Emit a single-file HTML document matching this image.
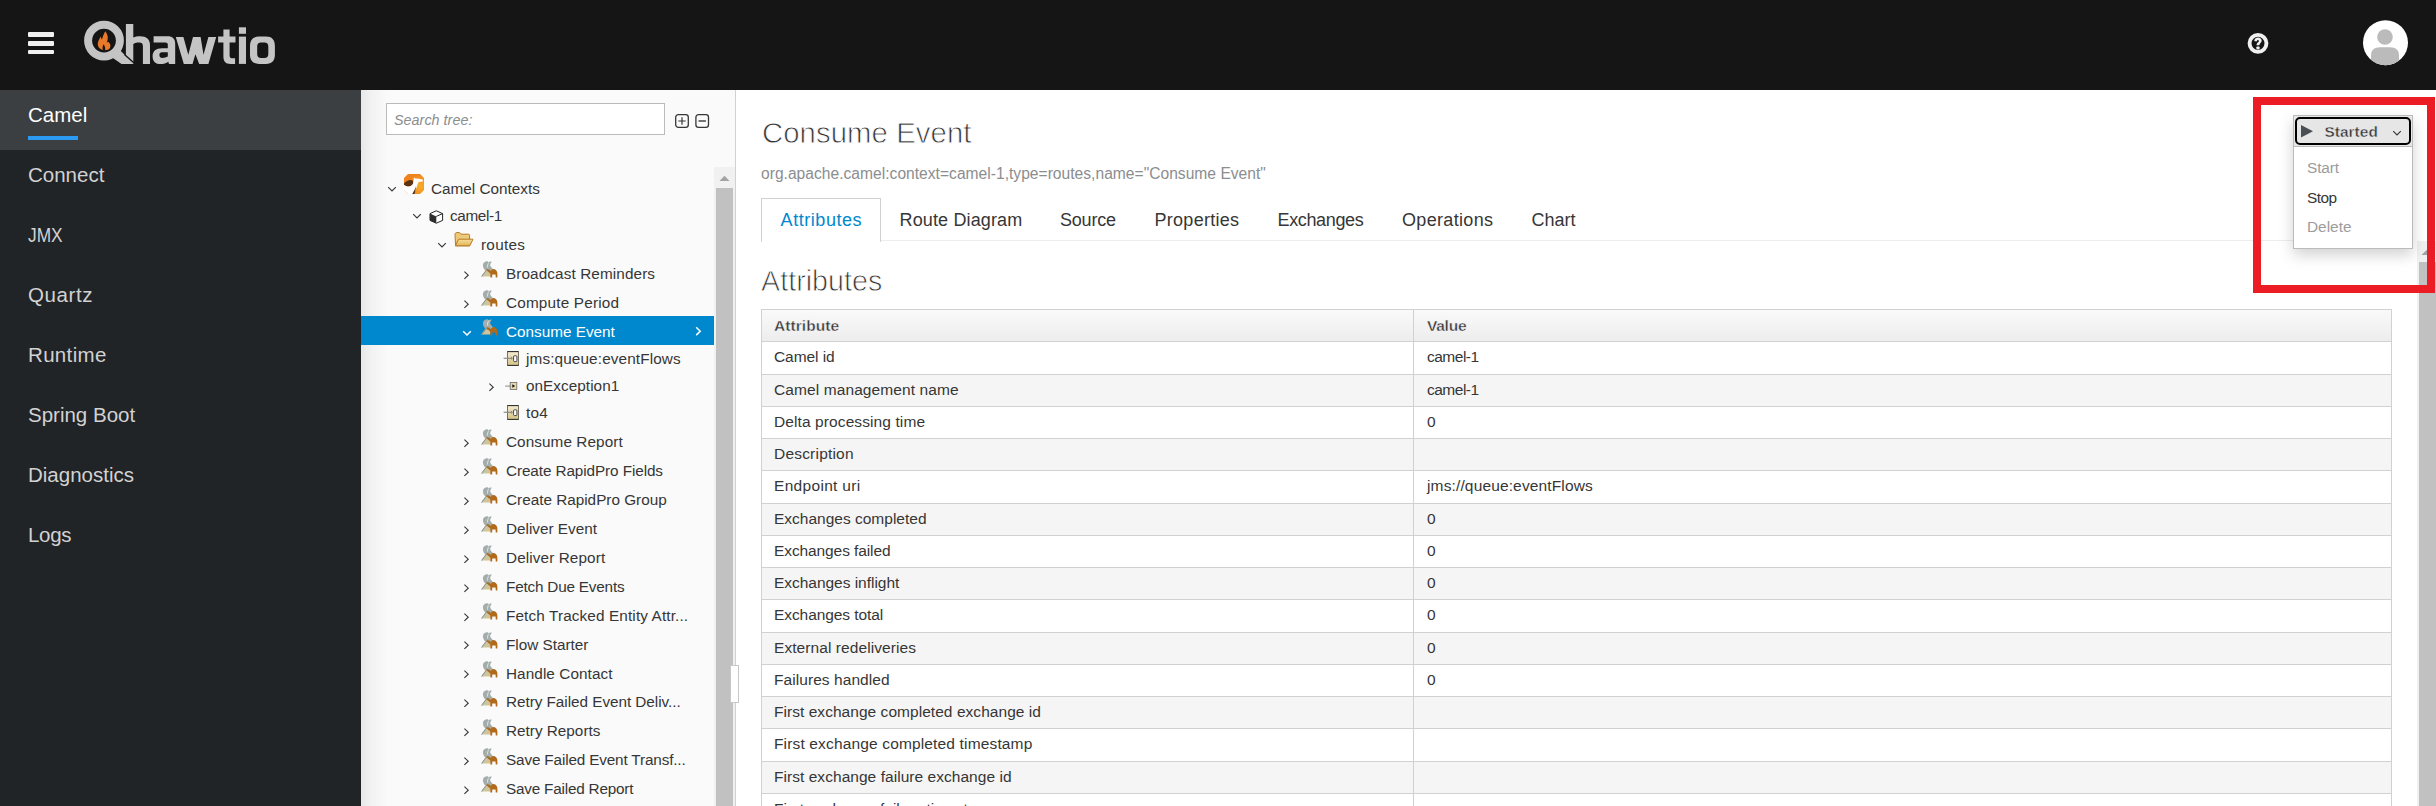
<!DOCTYPE html>
<html><head><meta charset="utf-8"><title>hawtio</title>
<style>
html,body{margin:0;padding:0;width:2436px;height:806px;overflow:hidden;background:#fff;font-family:"Liberation Sans",sans-serif;}
.t{position:absolute;white-space:nowrap;line-height:1;}
svg text{font-family:"Liberation Sans",sans-serif;}
</style></head><body>
<div style="position:absolute;left:0;top:0;width:2436px;height:90px;background:#151515"></div>
<div style="position:absolute;left:27.6px;top:32.2px;width:26.3px;height:4.8px;background:#f0f0f0;border-radius:1px"></div>
<div style="position:absolute;left:27.6px;top:41px;width:26.3px;height:4.7px;background:#f0f0f0;border-radius:1px"></div>
<div style="position:absolute;left:27.6px;top:49.8px;width:26.3px;height:4.2px;background:#f0f0f0;border-radius:1px"></div>
<svg style="position:absolute;left:0;top:0" width="300" height="90" viewBox="0 0 300 90">
<g fill="#c4c4c4">
<circle cx="104" cy="40.6" r="15.9" fill="none" stroke="#c4c4c4" stroke-width="8"/>
<path d="M112.5 57.8 L120.3 50.6 L133.8 63.9 L121.5 63.9 Z"/>
<path d="M125.9 23.9 H133.3 V37.6 C135.2 36.7 137.3 36.3 140 36.3 C146.5 36.3 150 39.2 150 45.2 V63.9 H142.9 V46.3 C142.9 43.6 141.6 42.6 139.2 42.6 C137 42.6 135.1 43.1 133.3 43.9 V63.9 H125.9 Z"/>
<path fill-rule="evenodd" d="M153.6 36.3 H167.5 C172.6 36.3 175.2 38.9 175.2 43.8 V63.9 H169 L168.3 61.8 C166.3 63.3 163.5 64.1 160.6 64.1 C155.6 64.1 152.6 61.3 152.6 56.4 C152.6 51 155.9 48.2 162 48.2 H167.8 V45 C167.8 43.3 167 42.6 165.2 42.6 H153.6 Z M167.8 52.3 H162 C160.2 52.3 159.4 53.3 159.4 55 C159.4 56.9 160.4 57.9 162.4 57.9 C164.4 57.9 166.3 57.4 167.8 56.6 Z"/>
<path d="M175.8 36.9 H183.4 L188.3 54.8 L193 36.9 H200.6 L203.5 54.8 L208.4 36.9 H216.2 L208.4 63.9 H199.2 L195.4 54.3 L192.5 63.9 H183.8 Z"/>
<path d="M223.4 29.5 H229.6 V36.6 H235.5 V42.5 H229.6 V55.5 C229.6 57.6 230.6 58.3 232.5 58.3 H235.1 V63.9 H230.5 C225.5 63.9 223.4 61.5 223.4 56.5 V42.5 H218.1 V36.6 H223.4 Z"/>
<rect x="238.9" y="27.3" width="7.1" height="6.5"/>
<rect x="238.9" y="36.6" width="7.1" height="27.3"/>
<path fill-rule="evenodd" d="M259 36.6 H266 C272 36.6 274.9 39.8 274.9 46 V54.5 C274.9 60.7 272 63.9 266 63.9 H259 C253 63.9 250 60.7 250 54.5 V46 C250 39.8 253 36.6 259 36.6 Z M261 42.5 C258.5 42.5 257.2 43.8 257.2 46.5 V54 C257.2 56.7 258.5 58 261 58 H264.5 C267 58 268.3 56.7 268.3 54 V46.5 C268.3 43.8 267 42.5 264.5 42.5 Z"/>
</g>
<path d="M124.5 54.4 L134.6 63.6" stroke="#151515" stroke-width="1.4"/>
<path d="M105.2 31.3 C107.6 34 108.6 37.5 107.2 41.6 L106.8 42.6 C107.5 42 108.2 41.8 108.8 42.3 C110.6 44 111 46.6 109.6 48.6 C108.6 49.8 107.2 50.2 105.2 50.2 C105.4 48 104.9 46 103.6 44.2 C102.6 45.8 102.3 47.8 102.9 49.9 C100.4 49.4 98 47.6 97.8 44.8 C97.6 41.8 99.2 39.2 100.8 36.6 C101 37.9 101.3 38.8 101.9 39.6 C102.6 36.6 104 34.2 105.2 31.3 Z" fill="#e8792b"/>
</svg>
<svg style="position:absolute;left:2244px;top:30px" width="28" height="28" viewBox="0 0 28 28">
<circle cx="14" cy="13.3" r="8.45" fill="none" stroke="#f0f0f0" stroke-width="3.9"/>
<path d="M10.3 11.2 C10.3 8.8 12 7.6 14 7.6 C16.2 7.6 17.7 8.9 17.7 10.8 C17.7 13 15.4 13.3 15.4 15.2 L12.6 15.2 C12.6 12.4 14.9 12.3 14.9 10.9 C14.9 10.3 14.5 10 14 10 C13.4 10 13 10.4 13 11.2 Z" fill="#f0f0f0"/>
<rect x="12.4" y="16.4" width="3.2" height="2.8" rx="0.8" fill="#f0f0f0"/>
</svg>
<svg style="position:absolute;left:2362px;top:20px" width="46" height="46" viewBox="0 0 46 46">
<defs><clipPath id="av"><circle cx="23.5" cy="22.7" r="22.5"/></clipPath></defs>
<circle cx="23.5" cy="22.7" r="22.5" fill="#ffffff"/>
<g clip-path="url(#av)">
<circle cx="23" cy="17" r="7.8" fill="#bbbbbb"/>
<path d="M9 46 L9 36 C9 30 12 27.5 18 27.3 L28 27.3 C34 27.5 37 30 37 36 L37 46 Z" fill="#bbbbbb"/>
</g></svg>
<div style="position:absolute;left:0;top:90px;width:361px;height:716px;background:#212427"></div>
<div style="position:absolute;left:0;top:90px;width:361px;height:60px;background:#3c3f42"></div>
<div style="position:absolute;left:28px;top:136px;width:50px;height:4px;background:#2b9af3"></div>
<div class="t" style="left:28px;top:104.65px;font-size:20.5px;color:#ffffff;font-weight:normal;font-style:normal;letter-spacing:0.0px;">Camel</div>
<div class="t" style="left:28px;top:164.65px;font-size:20.5px;color:#d2d2d2;font-weight:normal;font-style:normal;letter-spacing:0.0px;">Connect</div>
<div class="t" style="left:28px;top:224.65px;font-size:20.5px;color:#d2d2d2;font-weight:normal;font-style:normal;letter-spacing:0.0px;transform:scaleX(0.845);transform-origin:0 0;">JMX</div>
<div class="t" style="left:28px;top:284.65px;font-size:20.5px;color:#d2d2d2;font-weight:normal;font-style:normal;letter-spacing:0.6px;">Quartz</div>
<div class="t" style="left:28px;top:344.65px;font-size:20.5px;color:#d2d2d2;font-weight:normal;font-style:normal;letter-spacing:0.333px;">Runtime</div>
<div class="t" style="left:28px;top:404.65px;font-size:20.5px;color:#d2d2d2;font-weight:normal;font-style:normal;letter-spacing:0.0px;">Spring Boot</div>
<div class="t" style="left:28px;top:464.65px;font-size:20.5px;color:#d2d2d2;font-weight:normal;font-style:normal;letter-spacing:0.0px;">Diagnostics</div>
<div class="t" style="left:28px;top:524.65px;font-size:20.5px;color:#d2d2d2;font-weight:normal;font-style:normal;letter-spacing:-0.333px;">Logs</div>
<div style="position:absolute;left:361px;top:90px;width:374px;height:716px;background:#fafafa;border-right:1px solid #d1d1d1"></div>
<div style="position:absolute;left:361px;top:90px;width:28px;height:716px;background:linear-gradient(to right,rgba(0,0,0,0.075),rgba(0,0,0,0.035) 35%,rgba(0,0,0,0.01) 75%,rgba(0,0,0,0))"></div>
<div style="position:absolute;left:386px;top:103px;width:277px;height:30px;background:#fff;border:1px solid #bbbbbb"></div>
<div class="t" style="left:394px;top:112.70px;font-size:14.3px;color:#8b8d8f;font-weight:normal;font-style:italic;letter-spacing:0.047px;">Search tree:</div>
<svg style="position:absolute;left:674px;top:113px" width="38" height="16" viewBox="0 0 38 16">
<rect x="1.7" y="1.7" width="12.6" height="12.6" rx="2.6" fill="none" stroke="#363636" stroke-width="1.3"/>
<path d="M8 4.3 V11.7 M4.3 8 H11.7" stroke="#363636" stroke-width="1.2"/>
<rect x="21.9" y="1.7" width="12.6" height="12.6" rx="2.6" fill="none" stroke="#363636" stroke-width="1.3"/>
<path d="M24.5 8 H31.9" stroke="#363636" stroke-width="1.4"/>
</svg>
<div style="position:absolute;left:714px;top:167px;width:21px;height:639px;background:#f1f1f1"></div>
<div style="position:absolute;left:716px;top:188px;width:17px;height:618px;background:#c1c1c1"></div>
<svg style="position:absolute;left:714px;top:167px" width="21" height="21"><path d="M5.5 14 L10.5 8.7 L15.5 14 Z" fill="#a3a3a3"/></svg>
<div style="position:absolute;left:361px;top:316px;width:353px;height:29px;background:#0088ce"></div>
<svg style="position:absolute;left:386px;top:184px" width="12" height="10"><path d="M2.2 3.2 L6 7 L9.8 3.2" fill="none" stroke="#363636" stroke-width="1.15"/></svg>
<svg style="position:absolute;left:404px;top:174px" width="20" height="20" viewBox="0 0 20 20">
<defs><radialGradient id="cg" cx="0.78" cy="0.6" r="0.6"><stop offset="0" stop-color="#f7b02a"/><stop offset="1" stop-color="#ef8320"/></radialGradient></defs>
<path d="M4 0 H16 L20 4 V16 L16 20 H4 L0 16 V4 Z" fill="url(#cg)"/>
<path d="M0 9.2 C2 7.6 4.5 6 6.8 6.1 C8.6 6.3 9.6 7.4 9.4 9.2 L9.2 10.2 C8.5 11.5 6.5 12.6 4.3 12.4 C2.5 12.2 1 11.6 0 10.9 Z" fill="#5b3311"/>
<path d="M0 10.9 C1.5 11.8 3 12.4 4.3 12.4 C6.5 12.5 8.4 11.4 9.2 9 L10 3.2 L11 4.4 L13 4.4 C15 4.8 17 5.1 19 5.8 L18.6 7.4 C17 7.8 15.5 7.8 14.6 8 C13.2 11 12.2 15 10.7 18.5 L10 20 H4 L0 16 Z" fill="#ffffff"/>
<path d="M8.2 20 L10.2 16.5 L12 12.5 C11.6 16 11 18.5 10.6 20 Z" fill="#5b3311"/>
</svg>
<div class="t" style="left:431px;top:181.05px;font-size:15.3px;color:#363636;font-weight:normal;font-style:normal;letter-spacing:0.0px;">Camel Contexts</div>
<svg style="position:absolute;left:411px;top:211px" width="12" height="10"><path d="M2.2 3.2 L6 7 L9.8 3.2" fill="none" stroke="#363636" stroke-width="1.15"/></svg>
<svg style="position:absolute;left:428.5px;top:209.5px" width="15" height="14" viewBox="0 0 15 14">
<path d="M1 3.6 L7.3 0.8 L13.6 3.6 L13.6 10.4 L7.3 13.2 L1 10.4 Z" fill="#ffffff" stroke="#222" stroke-width="1" stroke-linejoin="round"/>
<path d="M1 3.6 L7.3 6.4 L7.3 13.2 L1 10.4 Z" fill="#2d2d2d"/>
<path d="M7.3 6.4 L13.6 3.6" stroke="#222" stroke-width="1"/>
</svg>
<div class="t" style="left:450px;top:207.85px;font-size:15.3px;color:#363636;font-weight:normal;font-style:normal;letter-spacing:-0.367px;">camel-1</div>
<svg style="position:absolute;left:436px;top:240px" width="12" height="10"><path d="M2.2 3.2 L6 7 L9.8 3.2" fill="none" stroke="#363636" stroke-width="1.15"/></svg>
<svg style="position:absolute;left:453.5px;top:231.5px" width="20" height="15" viewBox="0 0 20 15">
<defs><linearGradient id="fg" x1="0" y1="0" x2="0" y2="1"><stop offset="0" stop-color="#f6df9a"/><stop offset="1" stop-color="#e2b558"/></linearGradient></defs>
<path d="M1 2.5 C1 1.2 1.8 0.6 3 0.6 L5 0.6 C6 0.6 6.6 1.2 7 2.2 L14.5 2.2 C15.2 2.2 15.6 2.6 15.6 3.3 L15.6 13.8 L1.6 13.8 Z" fill="#ecca7a" stroke="#b97a26" stroke-width="1"/>
<path d="M1.4 13.8 L4.6 7.2 L19 7.2 L15.8 13.8 Z" fill="url(#fg)" stroke="#b97a26" stroke-width="1" stroke-linejoin="round"/>
</svg>
<div class="t" style="left:481px;top:237.05px;font-size:15.3px;color:#363636;font-weight:normal;font-style:normal;letter-spacing:0.28px;">routes</div>
<svg style="position:absolute;left:462px;top:268.8px" width="10" height="12"><path d="M2.4 2.6 L6.2 6.2 L2.4 9.8" fill="none" stroke="#363636" stroke-width="1.15"/></svg>
<svg style="position:absolute;left:481px;top:260.9px" width="18" height="18" viewBox="0 0 18 18">
<path d="M1.9 4.1 C1.9 2.5 3.5 0.2 5.6 0.2 C6.6 0.2 7.4 0.8 7.8 1.2 C8.4 0.4 9.6 0.1 10.8 0.8 C10 1.8 9.2 3 9.2 4.4 C10 6.4 11.5 7.6 13 8.6 L9.6 10.2 L5.6 10.5 L1.6 15.6 L0.3 15.6 C1.5 13.2 3.5 11 4.4 9.6 C3 8.6 1.9 6.5 1.9 4.1 Z" fill="#a3aeac"/>
<path d="M7.9 1.6 C6.9 2.9 6.3 4.8 6.6 6.6" fill="none" stroke="#e6ecec" stroke-width="0.9"/>
<path d="M1.2 15.6 L5.3 10.3 L9.4 11.6 L9.4 15.6 Z" fill="#cfc49a"/>
<path d="M0.6 15.5 L4.7 10" fill="none" stroke="#8d9893" stroke-width="0.9"/>
<path d="M5.4 8.5 C6.6 7.9 7.8 8.2 8.6 9 L9.8 10.1 C10.4 8.7 11.4 7.9 12.6 7.9 C14.1 7.9 15.2 9 15.8 10.3 C16.4 11.5 16.5 13.5 16.3 16.6 L14.8 16.6 L14.5 13.6 L11.3 13.6 L11.1 16.6 L9.4 16.6 L9.2 12.6 C8.2 11.6 6.9 10.5 5.4 9.5 Z" fill="#b06a1a"/>
</svg>
<div class="t" style="left:506px;top:265.85px;font-size:15.3px;color:#363636;font-weight:normal;font-style:normal;letter-spacing:0.106px;">Broadcast Reminders</div>
<svg style="position:absolute;left:462px;top:298.0px" width="10" height="12"><path d="M2.4 2.6 L6.2 6.2 L2.4 9.8" fill="none" stroke="#363636" stroke-width="1.15"/></svg>
<svg style="position:absolute;left:481px;top:290.1px" width="18" height="18" viewBox="0 0 18 18">
<path d="M1.9 4.1 C1.9 2.5 3.5 0.2 5.6 0.2 C6.6 0.2 7.4 0.8 7.8 1.2 C8.4 0.4 9.6 0.1 10.8 0.8 C10 1.8 9.2 3 9.2 4.4 C10 6.4 11.5 7.6 13 8.6 L9.6 10.2 L5.6 10.5 L1.6 15.6 L0.3 15.6 C1.5 13.2 3.5 11 4.4 9.6 C3 8.6 1.9 6.5 1.9 4.1 Z" fill="#a3aeac"/>
<path d="M7.9 1.6 C6.9 2.9 6.3 4.8 6.6 6.6" fill="none" stroke="#e6ecec" stroke-width="0.9"/>
<path d="M1.2 15.6 L5.3 10.3 L9.4 11.6 L9.4 15.6 Z" fill="#cfc49a"/>
<path d="M0.6 15.5 L4.7 10" fill="none" stroke="#8d9893" stroke-width="0.9"/>
<path d="M5.4 8.5 C6.6 7.9 7.8 8.2 8.6 9 L9.8 10.1 C10.4 8.7 11.4 7.9 12.6 7.9 C14.1 7.9 15.2 9 15.8 10.3 C16.4 11.5 16.5 13.5 16.3 16.6 L14.8 16.6 L14.5 13.6 L11.3 13.6 L11.1 16.6 L9.4 16.6 L9.2 12.6 C8.2 11.6 6.9 10.5 5.4 9.5 Z" fill="#b06a1a"/>
</svg>
<div class="t" style="left:506px;top:295.05px;font-size:15.3px;color:#363636;font-weight:normal;font-style:normal;letter-spacing:0.191px;">Compute Period</div>
<svg style="position:absolute;left:461px;top:327.7px" width="12" height="10"><path d="M2.2 3.2 L6 7 L9.8 3.2" fill="none" stroke="#ffffff" stroke-width="1.5"/></svg>
<svg style="position:absolute;left:481px;top:319.3px" width="18" height="18" viewBox="0 0 18 18">
<path d="M1.9 4.1 C1.9 2.5 3.5 0.2 5.6 0.2 C6.6 0.2 7.4 0.8 7.8 1.2 C8.4 0.4 9.6 0.1 10.8 0.8 C10 1.8 9.2 3 9.2 4.4 C10 6.4 11.5 7.6 13 8.6 L9.6 10.2 L5.6 10.5 L1.6 15.6 L0.3 15.6 C1.5 13.2 3.5 11 4.4 9.6 C3 8.6 1.9 6.5 1.9 4.1 Z" fill="#a3aeac"/>
<path d="M7.9 1.6 C6.9 2.9 6.3 4.8 6.6 6.6" fill="none" stroke="#e6ecec" stroke-width="0.9"/>
<path d="M1.2 15.6 L5.3 10.3 L9.4 11.6 L9.4 15.6 Z" fill="#cfc49a"/>
<path d="M0.6 15.5 L4.7 10" fill="none" stroke="#8d9893" stroke-width="0.9"/>
<path d="M5.4 8.5 C6.6 7.9 7.8 8.2 8.6 9 L9.8 10.1 C10.4 8.7 11.4 7.9 12.6 7.9 C14.1 7.9 15.2 9 15.8 10.3 C16.4 11.5 16.5 13.5 16.3 16.6 L14.8 16.6 L14.5 13.6 L11.3 13.6 L11.1 16.6 L9.4 16.6 L9.2 12.6 C8.2 11.6 6.9 10.5 5.4 9.5 Z" fill="#b06a1a"/>
</svg>
<div class="t" style="left:506px;top:324.25px;font-size:15.3px;color:#ffffff;font-weight:normal;font-style:normal;letter-spacing:0.0px;">Consume Event</div>
<svg style="position:absolute;left:694px;top:325px" width="10" height="12"><path d="M2.2 2.3 L6.2 6.2 L2.2 10.1" fill="none" stroke="#ffffff" stroke-width="1.5"/></svg>
<svg style="position:absolute;left:503px;top:351px" width="17" height="16" viewBox="0 0 17 16">
<defs><linearGradient id="bg503351" x1="0" y1="0" x2="0" y2="1"><stop offset="0" stop-color="#f4ecd2"/><stop offset="1" stop-color="#d4c284"/></linearGradient></defs>
<rect x="4.5" y="0.6" width="11" height="13.8" fill="url(#bg503351)" stroke="#6b6552" stroke-width="0.9"/>
<path d="M4.5 0.6 H15.5 M4.5 14.4 H15.5" stroke="#2e2e2e" stroke-width="1"/>
<path d="M0.6 7.3 H8.6" stroke="#8c8c8c" stroke-width="1.2"/>
<path d="M8 5.6 L10 7.3 L8 9 Z" fill="#8c8c8c"/>
<rect x="10.6" y="4.8" width="3.3" height="5.8" rx="0.9" fill="#ffffff" stroke="#333" stroke-width="0.9"/>
</svg>
<div class="t" style="left:526px;top:350.55px;font-size:15.3px;color:#363636;font-weight:normal;font-style:normal;letter-spacing:0.132px;">jms:queue:eventFlows</div>
<svg style="position:absolute;left:487px;top:381px" width="10" height="12"><path d="M2.4 2.6 L6.2 6.2 L2.4 9.8" fill="none" stroke="#363636" stroke-width="1.15"/></svg>
<svg style="position:absolute;left:504px;top:381px" width="14" height="10" viewBox="0 0 14 10">
<path d="M1.2 5.1 H7" stroke="#9a9a9a" stroke-width="1.2"/>
<rect x="6.2" y="1.4" width="6.6" height="7" fill="#e6d9aa" stroke="#6a6a6a" stroke-width="0.8"/>
<path d="M8.3 3.2 L11.1 5 L8.3 6.8 Z" fill="#111"/>
</svg>
<div class="t" style="left:526px;top:377.75px;font-size:15.3px;color:#363636;font-weight:normal;font-style:normal;letter-spacing:0.046px;">onException1</div>
<svg style="position:absolute;left:503px;top:405px" width="17" height="16" viewBox="0 0 17 16">
<defs><linearGradient id="bg503405" x1="0" y1="0" x2="0" y2="1"><stop offset="0" stop-color="#f4ecd2"/><stop offset="1" stop-color="#d4c284"/></linearGradient></defs>
<rect x="4.5" y="0.6" width="11" height="13.8" fill="url(#bg503405)" stroke="#6b6552" stroke-width="0.9"/>
<path d="M4.5 0.6 H15.5 M4.5 14.4 H15.5" stroke="#2e2e2e" stroke-width="1"/>
<path d="M0.6 7.3 H8.6" stroke="#8c8c8c" stroke-width="1.2"/>
<path d="M8 5.6 L10 7.3 L8 9 Z" fill="#8c8c8c"/>
<rect x="10.6" y="4.8" width="3.3" height="5.8" rx="0.9" fill="#ffffff" stroke="#333" stroke-width="0.9"/>
</svg>
<div class="t" style="left:526px;top:404.85px;font-size:15.3px;color:#363636;font-weight:normal;font-style:normal;letter-spacing:0.25px;">to4</div>
<svg style="position:absolute;left:462px;top:436.7px" width="10" height="12"><path d="M2.4 2.6 L6.2 6.2 L2.4 9.8" fill="none" stroke="#363636" stroke-width="1.15"/></svg>
<svg style="position:absolute;left:481px;top:428.8px" width="18" height="18" viewBox="0 0 18 18">
<path d="M1.9 4.1 C1.9 2.5 3.5 0.2 5.6 0.2 C6.6 0.2 7.4 0.8 7.8 1.2 C8.4 0.4 9.6 0.1 10.8 0.8 C10 1.8 9.2 3 9.2 4.4 C10 6.4 11.5 7.6 13 8.6 L9.6 10.2 L5.6 10.5 L1.6 15.6 L0.3 15.6 C1.5 13.2 3.5 11 4.4 9.6 C3 8.6 1.9 6.5 1.9 4.1 Z" fill="#a3aeac"/>
<path d="M7.9 1.6 C6.9 2.9 6.3 4.8 6.6 6.6" fill="none" stroke="#e6ecec" stroke-width="0.9"/>
<path d="M1.2 15.6 L5.3 10.3 L9.4 11.6 L9.4 15.6 Z" fill="#cfc49a"/>
<path d="M0.6 15.5 L4.7 10" fill="none" stroke="#8d9893" stroke-width="0.9"/>
<path d="M5.4 8.5 C6.6 7.9 7.8 8.2 8.6 9 L9.8 10.1 C10.4 8.7 11.4 7.9 12.6 7.9 C14.1 7.9 15.2 9 15.8 10.3 C16.4 11.5 16.5 13.5 16.3 16.6 L14.8 16.6 L14.5 13.6 L11.3 13.6 L11.1 16.6 L9.4 16.6 L9.2 12.6 C8.2 11.6 6.9 10.5 5.4 9.5 Z" fill="#b06a1a"/>
</svg>
<div class="t" style="left:506px;top:433.75px;font-size:15.3px;color:#363636;font-weight:normal;font-style:normal;letter-spacing:0.077px;">Consume Report</div>
<svg style="position:absolute;left:462px;top:465.66999999999996px" width="10" height="12"><path d="M2.4 2.6 L6.2 6.2 L2.4 9.8" fill="none" stroke="#363636" stroke-width="1.15"/></svg>
<svg style="position:absolute;left:481px;top:457.8px" width="18" height="18" viewBox="0 0 18 18">
<path d="M1.9 4.1 C1.9 2.5 3.5 0.2 5.6 0.2 C6.6 0.2 7.4 0.8 7.8 1.2 C8.4 0.4 9.6 0.1 10.8 0.8 C10 1.8 9.2 3 9.2 4.4 C10 6.4 11.5 7.6 13 8.6 L9.6 10.2 L5.6 10.5 L1.6 15.6 L0.3 15.6 C1.5 13.2 3.5 11 4.4 9.6 C3 8.6 1.9 6.5 1.9 4.1 Z" fill="#a3aeac"/>
<path d="M7.9 1.6 C6.9 2.9 6.3 4.8 6.6 6.6" fill="none" stroke="#e6ecec" stroke-width="0.9"/>
<path d="M1.2 15.6 L5.3 10.3 L9.4 11.6 L9.4 15.6 Z" fill="#cfc49a"/>
<path d="M0.6 15.5 L4.7 10" fill="none" stroke="#8d9893" stroke-width="0.9"/>
<path d="M5.4 8.5 C6.6 7.9 7.8 8.2 8.6 9 L9.8 10.1 C10.4 8.7 11.4 7.9 12.6 7.9 C14.1 7.9 15.2 9 15.8 10.3 C16.4 11.5 16.5 13.5 16.3 16.6 L14.8 16.6 L14.5 13.6 L11.3 13.6 L11.1 16.6 L9.4 16.6 L9.2 12.6 C8.2 11.6 6.9 10.5 5.4 9.5 Z" fill="#b06a1a"/>
</svg>
<div class="t" style="left:506px;top:462.72px;font-size:15.3px;color:#363636;font-weight:normal;font-style:normal;letter-spacing:-0.094px;">Create RapidPro Fields</div>
<svg style="position:absolute;left:462px;top:494.64px" width="10" height="12"><path d="M2.4 2.6 L6.2 6.2 L2.4 9.8" fill="none" stroke="#363636" stroke-width="1.15"/></svg>
<svg style="position:absolute;left:481px;top:486.7px" width="18" height="18" viewBox="0 0 18 18">
<path d="M1.9 4.1 C1.9 2.5 3.5 0.2 5.6 0.2 C6.6 0.2 7.4 0.8 7.8 1.2 C8.4 0.4 9.6 0.1 10.8 0.8 C10 1.8 9.2 3 9.2 4.4 C10 6.4 11.5 7.6 13 8.6 L9.6 10.2 L5.6 10.5 L1.6 15.6 L0.3 15.6 C1.5 13.2 3.5 11 4.4 9.6 C3 8.6 1.9 6.5 1.9 4.1 Z" fill="#a3aeac"/>
<path d="M7.9 1.6 C6.9 2.9 6.3 4.8 6.6 6.6" fill="none" stroke="#e6ecec" stroke-width="0.9"/>
<path d="M1.2 15.6 L5.3 10.3 L9.4 11.6 L9.4 15.6 Z" fill="#cfc49a"/>
<path d="M0.6 15.5 L4.7 10" fill="none" stroke="#8d9893" stroke-width="0.9"/>
<path d="M5.4 8.5 C6.6 7.9 7.8 8.2 8.6 9 L9.8 10.1 C10.4 8.7 11.4 7.9 12.6 7.9 C14.1 7.9 15.2 9 15.8 10.3 C16.4 11.5 16.5 13.5 16.3 16.6 L14.8 16.6 L14.5 13.6 L11.3 13.6 L11.1 16.6 L9.4 16.6 L9.2 12.6 C8.2 11.6 6.9 10.5 5.4 9.5 Z" fill="#b06a1a"/>
</svg>
<div class="t" style="left:506px;top:491.69px;font-size:15.3px;color:#363636;font-weight:normal;font-style:normal;letter-spacing:0.0px;">Create RapidPro Group</div>
<svg style="position:absolute;left:462px;top:523.61px" width="10" height="12"><path d="M2.4 2.6 L6.2 6.2 L2.4 9.8" fill="none" stroke="#363636" stroke-width="1.15"/></svg>
<svg style="position:absolute;left:481px;top:515.7px" width="18" height="18" viewBox="0 0 18 18">
<path d="M1.9 4.1 C1.9 2.5 3.5 0.2 5.6 0.2 C6.6 0.2 7.4 0.8 7.8 1.2 C8.4 0.4 9.6 0.1 10.8 0.8 C10 1.8 9.2 3 9.2 4.4 C10 6.4 11.5 7.6 13 8.6 L9.6 10.2 L5.6 10.5 L1.6 15.6 L0.3 15.6 C1.5 13.2 3.5 11 4.4 9.6 C3 8.6 1.9 6.5 1.9 4.1 Z" fill="#a3aeac"/>
<path d="M7.9 1.6 C6.9 2.9 6.3 4.8 6.6 6.6" fill="none" stroke="#e6ecec" stroke-width="0.9"/>
<path d="M1.2 15.6 L5.3 10.3 L9.4 11.6 L9.4 15.6 Z" fill="#cfc49a"/>
<path d="M0.6 15.5 L4.7 10" fill="none" stroke="#8d9893" stroke-width="0.9"/>
<path d="M5.4 8.5 C6.6 7.9 7.8 8.2 8.6 9 L9.8 10.1 C10.4 8.7 11.4 7.9 12.6 7.9 C14.1 7.9 15.2 9 15.8 10.3 C16.4 11.5 16.5 13.5 16.3 16.6 L14.8 16.6 L14.5 13.6 L11.3 13.6 L11.1 16.6 L9.4 16.6 L9.2 12.6 C8.2 11.6 6.9 10.5 5.4 9.5 Z" fill="#b06a1a"/>
</svg>
<div class="t" style="left:506px;top:520.66px;font-size:15.3px;color:#363636;font-weight:normal;font-style:normal;letter-spacing:0.0px;">Deliver Event</div>
<svg style="position:absolute;left:462px;top:552.5799999999999px" width="10" height="12"><path d="M2.4 2.6 L6.2 6.2 L2.4 9.8" fill="none" stroke="#363636" stroke-width="1.15"/></svg>
<svg style="position:absolute;left:481px;top:544.7px" width="18" height="18" viewBox="0 0 18 18">
<path d="M1.9 4.1 C1.9 2.5 3.5 0.2 5.6 0.2 C6.6 0.2 7.4 0.8 7.8 1.2 C8.4 0.4 9.6 0.1 10.8 0.8 C10 1.8 9.2 3 9.2 4.4 C10 6.4 11.5 7.6 13 8.6 L9.6 10.2 L5.6 10.5 L1.6 15.6 L0.3 15.6 C1.5 13.2 3.5 11 4.4 9.6 C3 8.6 1.9 6.5 1.9 4.1 Z" fill="#a3aeac"/>
<path d="M7.9 1.6 C6.9 2.9 6.3 4.8 6.6 6.6" fill="none" stroke="#e6ecec" stroke-width="0.9"/>
<path d="M1.2 15.6 L5.3 10.3 L9.4 11.6 L9.4 15.6 Z" fill="#cfc49a"/>
<path d="M0.6 15.5 L4.7 10" fill="none" stroke="#8d9893" stroke-width="0.9"/>
<path d="M5.4 8.5 C6.6 7.9 7.8 8.2 8.6 9 L9.8 10.1 C10.4 8.7 11.4 7.9 12.6 7.9 C14.1 7.9 15.2 9 15.8 10.3 C16.4 11.5 16.5 13.5 16.3 16.6 L14.8 16.6 L14.5 13.6 L11.3 13.6 L11.1 16.6 L9.4 16.6 L9.2 12.6 C8.2 11.6 6.9 10.5 5.4 9.5 Z" fill="#b06a1a"/>
</svg>
<div class="t" style="left:506px;top:549.63px;font-size:15.3px;color:#363636;font-weight:normal;font-style:normal;letter-spacing:0.108px;">Deliver Report</div>
<svg style="position:absolute;left:462px;top:581.55px" width="10" height="12"><path d="M2.4 2.6 L6.2 6.2 L2.4 9.8" fill="none" stroke="#363636" stroke-width="1.15"/></svg>
<svg style="position:absolute;left:481px;top:573.6px" width="18" height="18" viewBox="0 0 18 18">
<path d="M1.9 4.1 C1.9 2.5 3.5 0.2 5.6 0.2 C6.6 0.2 7.4 0.8 7.8 1.2 C8.4 0.4 9.6 0.1 10.8 0.8 C10 1.8 9.2 3 9.2 4.4 C10 6.4 11.5 7.6 13 8.6 L9.6 10.2 L5.6 10.5 L1.6 15.6 L0.3 15.6 C1.5 13.2 3.5 11 4.4 9.6 C3 8.6 1.9 6.5 1.9 4.1 Z" fill="#a3aeac"/>
<path d="M7.9 1.6 C6.9 2.9 6.3 4.8 6.6 6.6" fill="none" stroke="#e6ecec" stroke-width="0.9"/>
<path d="M1.2 15.6 L5.3 10.3 L9.4 11.6 L9.4 15.6 Z" fill="#cfc49a"/>
<path d="M0.6 15.5 L4.7 10" fill="none" stroke="#8d9893" stroke-width="0.9"/>
<path d="M5.4 8.5 C6.6 7.9 7.8 8.2 8.6 9 L9.8 10.1 C10.4 8.7 11.4 7.9 12.6 7.9 C14.1 7.9 15.2 9 15.8 10.3 C16.4 11.5 16.5 13.5 16.3 16.6 L14.8 16.6 L14.5 13.6 L11.3 13.6 L11.1 16.6 L9.4 16.6 L9.2 12.6 C8.2 11.6 6.9 10.5 5.4 9.5 Z" fill="#b06a1a"/>
</svg>
<div class="t" style="left:506px;top:578.60px;font-size:15.3px;color:#363636;font-weight:normal;font-style:normal;letter-spacing:-0.2px;">Fetch Due Events</div>
<svg style="position:absolute;left:462px;top:610.52px" width="10" height="12"><path d="M2.4 2.6 L6.2 6.2 L2.4 9.8" fill="none" stroke="#363636" stroke-width="1.15"/></svg>
<svg style="position:absolute;left:481px;top:602.6px" width="18" height="18" viewBox="0 0 18 18">
<path d="M1.9 4.1 C1.9 2.5 3.5 0.2 5.6 0.2 C6.6 0.2 7.4 0.8 7.8 1.2 C8.4 0.4 9.6 0.1 10.8 0.8 C10 1.8 9.2 3 9.2 4.4 C10 6.4 11.5 7.6 13 8.6 L9.6 10.2 L5.6 10.5 L1.6 15.6 L0.3 15.6 C1.5 13.2 3.5 11 4.4 9.6 C3 8.6 1.9 6.5 1.9 4.1 Z" fill="#a3aeac"/>
<path d="M7.9 1.6 C6.9 2.9 6.3 4.8 6.6 6.6" fill="none" stroke="#e6ecec" stroke-width="0.9"/>
<path d="M1.2 15.6 L5.3 10.3 L9.4 11.6 L9.4 15.6 Z" fill="#cfc49a"/>
<path d="M0.6 15.5 L4.7 10" fill="none" stroke="#8d9893" stroke-width="0.9"/>
<path d="M5.4 8.5 C6.6 7.9 7.8 8.2 8.6 9 L9.8 10.1 C10.4 8.7 11.4 7.9 12.6 7.9 C14.1 7.9 15.2 9 15.8 10.3 C16.4 11.5 16.5 13.5 16.3 16.6 L14.8 16.6 L14.5 13.6 L11.3 13.6 L11.1 16.6 L9.4 16.6 L9.2 12.6 C8.2 11.6 6.9 10.5 5.4 9.5 Z" fill="#b06a1a"/>
</svg>
<div class="t" style="left:506px;top:607.57px;font-size:15.3px;color:#363636;font-weight:normal;font-style:normal;letter-spacing:0.131px;">Fetch Tracked Entity Attr...</div>
<svg style="position:absolute;left:462px;top:639.49px" width="10" height="12"><path d="M2.4 2.6 L6.2 6.2 L2.4 9.8" fill="none" stroke="#363636" stroke-width="1.15"/></svg>
<svg style="position:absolute;left:481px;top:631.6px" width="18" height="18" viewBox="0 0 18 18">
<path d="M1.9 4.1 C1.9 2.5 3.5 0.2 5.6 0.2 C6.6 0.2 7.4 0.8 7.8 1.2 C8.4 0.4 9.6 0.1 10.8 0.8 C10 1.8 9.2 3 9.2 4.4 C10 6.4 11.5 7.6 13 8.6 L9.6 10.2 L5.6 10.5 L1.6 15.6 L0.3 15.6 C1.5 13.2 3.5 11 4.4 9.6 C3 8.6 1.9 6.5 1.9 4.1 Z" fill="#a3aeac"/>
<path d="M7.9 1.6 C6.9 2.9 6.3 4.8 6.6 6.6" fill="none" stroke="#e6ecec" stroke-width="0.9"/>
<path d="M1.2 15.6 L5.3 10.3 L9.4 11.6 L9.4 15.6 Z" fill="#cfc49a"/>
<path d="M0.6 15.5 L4.7 10" fill="none" stroke="#8d9893" stroke-width="0.9"/>
<path d="M5.4 8.5 C6.6 7.9 7.8 8.2 8.6 9 L9.8 10.1 C10.4 8.7 11.4 7.9 12.6 7.9 C14.1 7.9 15.2 9 15.8 10.3 C16.4 11.5 16.5 13.5 16.3 16.6 L14.8 16.6 L14.5 13.6 L11.3 13.6 L11.1 16.6 L9.4 16.6 L9.2 12.6 C8.2 11.6 6.9 10.5 5.4 9.5 Z" fill="#b06a1a"/>
</svg>
<div class="t" style="left:506px;top:636.54px;font-size:15.3px;color:#363636;font-weight:normal;font-style:normal;letter-spacing:0.0px;">Flow Starter</div>
<svg style="position:absolute;left:462px;top:668.46px" width="10" height="12"><path d="M2.4 2.6 L6.2 6.2 L2.4 9.8" fill="none" stroke="#363636" stroke-width="1.15"/></svg>
<svg style="position:absolute;left:481px;top:660.6px" width="18" height="18" viewBox="0 0 18 18">
<path d="M1.9 4.1 C1.9 2.5 3.5 0.2 5.6 0.2 C6.6 0.2 7.4 0.8 7.8 1.2 C8.4 0.4 9.6 0.1 10.8 0.8 C10 1.8 9.2 3 9.2 4.4 C10 6.4 11.5 7.6 13 8.6 L9.6 10.2 L5.6 10.5 L1.6 15.6 L0.3 15.6 C1.5 13.2 3.5 11 4.4 9.6 C3 8.6 1.9 6.5 1.9 4.1 Z" fill="#a3aeac"/>
<path d="M7.9 1.6 C6.9 2.9 6.3 4.8 6.6 6.6" fill="none" stroke="#e6ecec" stroke-width="0.9"/>
<path d="M1.2 15.6 L5.3 10.3 L9.4 11.6 L9.4 15.6 Z" fill="#cfc49a"/>
<path d="M0.6 15.5 L4.7 10" fill="none" stroke="#8d9893" stroke-width="0.9"/>
<path d="M5.4 8.5 C6.6 7.9 7.8 8.2 8.6 9 L9.8 10.1 C10.4 8.7 11.4 7.9 12.6 7.9 C14.1 7.9 15.2 9 15.8 10.3 C16.4 11.5 16.5 13.5 16.3 16.6 L14.8 16.6 L14.5 13.6 L11.3 13.6 L11.1 16.6 L9.4 16.6 L9.2 12.6 C8.2 11.6 6.9 10.5 5.4 9.5 Z" fill="#b06a1a"/>
</svg>
<div class="t" style="left:506px;top:665.51px;font-size:15.3px;color:#363636;font-weight:normal;font-style:normal;letter-spacing:0.077px;">Handle Contact</div>
<svg style="position:absolute;left:462px;top:697.4300000000001px" width="10" height="12"><path d="M2.4 2.6 L6.2 6.2 L2.4 9.8" fill="none" stroke="#363636" stroke-width="1.15"/></svg>
<svg style="position:absolute;left:481px;top:689.5px" width="18" height="18" viewBox="0 0 18 18">
<path d="M1.9 4.1 C1.9 2.5 3.5 0.2 5.6 0.2 C6.6 0.2 7.4 0.8 7.8 1.2 C8.4 0.4 9.6 0.1 10.8 0.8 C10 1.8 9.2 3 9.2 4.4 C10 6.4 11.5 7.6 13 8.6 L9.6 10.2 L5.6 10.5 L1.6 15.6 L0.3 15.6 C1.5 13.2 3.5 11 4.4 9.6 C3 8.6 1.9 6.5 1.9 4.1 Z" fill="#a3aeac"/>
<path d="M7.9 1.6 C6.9 2.9 6.3 4.8 6.6 6.6" fill="none" stroke="#e6ecec" stroke-width="0.9"/>
<path d="M1.2 15.6 L5.3 10.3 L9.4 11.6 L9.4 15.6 Z" fill="#cfc49a"/>
<path d="M0.6 15.5 L4.7 10" fill="none" stroke="#8d9893" stroke-width="0.9"/>
<path d="M5.4 8.5 C6.6 7.9 7.8 8.2 8.6 9 L9.8 10.1 C10.4 8.7 11.4 7.9 12.6 7.9 C14.1 7.9 15.2 9 15.8 10.3 C16.4 11.5 16.5 13.5 16.3 16.6 L14.8 16.6 L14.5 13.6 L11.3 13.6 L11.1 16.6 L9.4 16.6 L9.2 12.6 C8.2 11.6 6.9 10.5 5.4 9.5 Z" fill="#b06a1a"/>
</svg>
<div class="t" style="left:506px;top:694.48px;font-size:15.3px;color:#363636;font-weight:normal;font-style:normal;letter-spacing:-0.038px;">Retry Failed Event Deliv...</div>
<svg style="position:absolute;left:462px;top:726.4px" width="10" height="12"><path d="M2.4 2.6 L6.2 6.2 L2.4 9.8" fill="none" stroke="#363636" stroke-width="1.15"/></svg>
<svg style="position:absolute;left:481px;top:718.5px" width="18" height="18" viewBox="0 0 18 18">
<path d="M1.9 4.1 C1.9 2.5 3.5 0.2 5.6 0.2 C6.6 0.2 7.4 0.8 7.8 1.2 C8.4 0.4 9.6 0.1 10.8 0.8 C10 1.8 9.2 3 9.2 4.4 C10 6.4 11.5 7.6 13 8.6 L9.6 10.2 L5.6 10.5 L1.6 15.6 L0.3 15.6 C1.5 13.2 3.5 11 4.4 9.6 C3 8.6 1.9 6.5 1.9 4.1 Z" fill="#a3aeac"/>
<path d="M7.9 1.6 C6.9 2.9 6.3 4.8 6.6 6.6" fill="none" stroke="#e6ecec" stroke-width="0.9"/>
<path d="M1.2 15.6 L5.3 10.3 L9.4 11.6 L9.4 15.6 Z" fill="#cfc49a"/>
<path d="M0.6 15.5 L4.7 10" fill="none" stroke="#8d9893" stroke-width="0.9"/>
<path d="M5.4 8.5 C6.6 7.9 7.8 8.2 8.6 9 L9.8 10.1 C10.4 8.7 11.4 7.9 12.6 7.9 C14.1 7.9 15.2 9 15.8 10.3 C16.4 11.5 16.5 13.5 16.3 16.6 L14.8 16.6 L14.5 13.6 L11.3 13.6 L11.1 16.6 L9.4 16.6 L9.2 12.6 C8.2 11.6 6.9 10.5 5.4 9.5 Z" fill="#b06a1a"/>
</svg>
<div class="t" style="left:506px;top:723.45px;font-size:15.3px;color:#363636;font-weight:normal;font-style:normal;letter-spacing:0.001px;">Retry Reports</div>
<svg style="position:absolute;left:462px;top:755.3699999999999px" width="10" height="12"><path d="M2.4 2.6 L6.2 6.2 L2.4 9.8" fill="none" stroke="#363636" stroke-width="1.15"/></svg>
<svg style="position:absolute;left:481px;top:747.5px" width="18" height="18" viewBox="0 0 18 18">
<path d="M1.9 4.1 C1.9 2.5 3.5 0.2 5.6 0.2 C6.6 0.2 7.4 0.8 7.8 1.2 C8.4 0.4 9.6 0.1 10.8 0.8 C10 1.8 9.2 3 9.2 4.4 C10 6.4 11.5 7.6 13 8.6 L9.6 10.2 L5.6 10.5 L1.6 15.6 L0.3 15.6 C1.5 13.2 3.5 11 4.4 9.6 C3 8.6 1.9 6.5 1.9 4.1 Z" fill="#a3aeac"/>
<path d="M7.9 1.6 C6.9 2.9 6.3 4.8 6.6 6.6" fill="none" stroke="#e6ecec" stroke-width="0.9"/>
<path d="M1.2 15.6 L5.3 10.3 L9.4 11.6 L9.4 15.6 Z" fill="#cfc49a"/>
<path d="M0.6 15.5 L4.7 10" fill="none" stroke="#8d9893" stroke-width="0.9"/>
<path d="M5.4 8.5 C6.6 7.9 7.8 8.2 8.6 9 L9.8 10.1 C10.4 8.7 11.4 7.9 12.6 7.9 C14.1 7.9 15.2 9 15.8 10.3 C16.4 11.5 16.5 13.5 16.3 16.6 L14.8 16.6 L14.5 13.6 L11.3 13.6 L11.1 16.6 L9.4 16.6 L9.2 12.6 C8.2 11.6 6.9 10.5 5.4 9.5 Z" fill="#b06a1a"/>
</svg>
<div class="t" style="left:506px;top:752.42px;font-size:15.3px;color:#363636;font-weight:normal;font-style:normal;letter-spacing:-0.153px;">Save Failed Event Transf...</div>
<svg style="position:absolute;left:462px;top:784.3399999999999px" width="10" height="12"><path d="M2.4 2.6 L6.2 6.2 L2.4 9.8" fill="none" stroke="#363636" stroke-width="1.15"/></svg>
<svg style="position:absolute;left:481px;top:776.4px" width="18" height="18" viewBox="0 0 18 18">
<path d="M1.9 4.1 C1.9 2.5 3.5 0.2 5.6 0.2 C6.6 0.2 7.4 0.8 7.8 1.2 C8.4 0.4 9.6 0.1 10.8 0.8 C10 1.8 9.2 3 9.2 4.4 C10 6.4 11.5 7.6 13 8.6 L9.6 10.2 L5.6 10.5 L1.6 15.6 L0.3 15.6 C1.5 13.2 3.5 11 4.4 9.6 C3 8.6 1.9 6.5 1.9 4.1 Z" fill="#a3aeac"/>
<path d="M7.9 1.6 C6.9 2.9 6.3 4.8 6.6 6.6" fill="none" stroke="#e6ecec" stroke-width="0.9"/>
<path d="M1.2 15.6 L5.3 10.3 L9.4 11.6 L9.4 15.6 Z" fill="#cfc49a"/>
<path d="M0.6 15.5 L4.7 10" fill="none" stroke="#8d9893" stroke-width="0.9"/>
<path d="M5.4 8.5 C6.6 7.9 7.8 8.2 8.6 9 L9.8 10.1 C10.4 8.7 11.4 7.9 12.6 7.9 C14.1 7.9 15.2 9 15.8 10.3 C16.4 11.5 16.5 13.5 16.3 16.6 L14.8 16.6 L14.5 13.6 L11.3 13.6 L11.1 16.6 L9.4 16.6 L9.2 12.6 C8.2 11.6 6.9 10.5 5.4 9.5 Z" fill="#b06a1a"/>
</svg>
<div class="t" style="left:506px;top:781.39px;font-size:15.3px;color:#363636;font-weight:normal;font-style:normal;letter-spacing:-0.206px;">Save Failed Report</div>
<div style="position:absolute;left:736px;top:90px;width:1700px;height:716px;background:#ffffff"></div>
<div class="t" style="left:762px;top:118.40px;font-size:29.3px;color:#363636;font-weight:normal;font-style:normal;letter-spacing:0.083px;-webkit-text-stroke:0.8px #fff;">Consume Event</div>
<div class="t" style="left:761px;top:165.79px;font-size:15.6px;color:#8b8d8f;font-weight:normal;font-style:normal;letter-spacing:0.016px;">org.apache.camel:context=camel-1,type=routes,name="Consume Event"</div>
<div style="position:absolute;left:761px;top:240px;width:1631px;height:1px;background:#ededed"></div>
<div style="position:absolute;left:761px;top:198px;width:118px;height:43px;background:#fff;border:1px solid #d1d1d1;border-bottom:none"></div>
<div class="t" style="left:780.6px;top:210.96px;font-size:18px;color:#0088ce;font-weight:normal;font-style:normal;letter-spacing:0.555px;">Attributes</div>
<div class="t" style="left:899.6px;top:210.96px;font-size:18px;color:#363636;font-weight:normal;font-style:normal;letter-spacing:0.125px;">Route Diagram</div>
<div class="t" style="left:1060px;top:210.96px;font-size:18px;color:#363636;font-weight:normal;font-style:normal;letter-spacing:-0.2px;">Source</div>
<div class="t" style="left:1154.5px;top:210.96px;font-size:18px;color:#363636;font-weight:normal;font-style:normal;letter-spacing:0.285px;">Properties</div>
<div class="t" style="left:1277.6px;top:210.96px;font-size:18px;color:#363636;font-weight:normal;font-style:normal;letter-spacing:-0.375px;">Exchanges</div>
<div class="t" style="left:1402px;top:210.96px;font-size:18px;color:#363636;font-weight:normal;font-style:normal;letter-spacing:0.333px;">Operations</div>
<div class="t" style="left:1531.4px;top:210.96px;font-size:18px;color:#363636;font-weight:normal;font-style:normal;letter-spacing:0.0px;">Chart</div>
<div class="t" style="left:761px;top:267.19px;font-size:28.6px;color:#363636;font-weight:normal;font-style:normal;letter-spacing:0.056px;-webkit-text-stroke:0.8px #fff;">Attributes</div>
<div style="position:absolute;left:761px;top:309px;width:1631px;height:32px;background:linear-gradient(#fafafa,#ededed)"></div>
<div style="position:absolute;left:761px;top:341.40px;width:1631px;height:32.25px;background:#ffffff"></div>
<div class="t" style="left:774px;top:349.48px;font-size:15.5px;color:#363636;font-weight:normal;font-style:normal;letter-spacing:-0.078px;">Camel id</div>
<div class="t" style="left:1427px;top:349.48px;font-size:15.5px;color:#363636;font-weight:normal;font-style:normal;letter-spacing:-0.5px;">camel-1</div>
<div style="position:absolute;left:761px;top:373.65px;width:1631px;height:32.25px;background:#f5f5f5"></div>
<div class="t" style="left:774px;top:381.73px;font-size:15.5px;color:#363636;font-weight:normal;font-style:normal;letter-spacing:0.1px;">Camel management name</div>
<div class="t" style="left:1427px;top:381.73px;font-size:15.5px;color:#363636;font-weight:normal;font-style:normal;letter-spacing:-0.5px;">camel-1</div>
<div style="position:absolute;left:761px;top:405.90px;width:1631px;height:32.25px;background:#ffffff"></div>
<div class="t" style="left:774px;top:413.98px;font-size:15.5px;color:#363636;font-weight:normal;font-style:normal;letter-spacing:0.1px;">Delta processing time</div>
<div class="t" style="left:1427px;top:413.98px;font-size:15.5px;color:#363636;font-weight:normal;font-style:normal;letter-spacing:0px;">0</div>
<div style="position:absolute;left:761px;top:438.15px;width:1631px;height:32.25px;background:#f5f5f5"></div>
<div class="t" style="left:774px;top:446.23px;font-size:15.5px;color:#363636;font-weight:normal;font-style:normal;letter-spacing:0.201px;">Description</div>
<div style="position:absolute;left:761px;top:470.40px;width:1631px;height:32.25px;background:#ffffff"></div>
<div class="t" style="left:774px;top:478.48px;font-size:15.5px;color:#363636;font-weight:normal;font-style:normal;letter-spacing:0.319px;">Endpoint uri</div>
<div class="t" style="left:1427px;top:478.48px;font-size:15.5px;color:#363636;font-weight:normal;font-style:normal;letter-spacing:0.141px;">jms://queue:eventFlows</div>
<div style="position:absolute;left:761px;top:502.65px;width:1631px;height:32.25px;background:#f5f5f5"></div>
<div class="t" style="left:774px;top:510.73px;font-size:15.5px;color:#363636;font-weight:normal;font-style:normal;letter-spacing:0.0px;">Exchanges completed</div>
<div class="t" style="left:1427px;top:510.73px;font-size:15.5px;color:#363636;font-weight:normal;font-style:normal;letter-spacing:0px;">0</div>
<div style="position:absolute;left:761px;top:534.90px;width:1631px;height:32.25px;background:#ffffff"></div>
<div class="t" style="left:774px;top:542.98px;font-size:15.5px;color:#363636;font-weight:normal;font-style:normal;letter-spacing:-0.101px;">Exchanges failed</div>
<div class="t" style="left:1427px;top:542.98px;font-size:15.5px;color:#363636;font-weight:normal;font-style:normal;letter-spacing:0px;">0</div>
<div style="position:absolute;left:761px;top:567.15px;width:1631px;height:32.25px;background:#f5f5f5"></div>
<div class="t" style="left:774px;top:575.23px;font-size:15.5px;color:#363636;font-weight:normal;font-style:normal;letter-spacing:-0.031px;">Exchanges inflight</div>
<div class="t" style="left:1427px;top:575.23px;font-size:15.5px;color:#363636;font-weight:normal;font-style:normal;letter-spacing:0px;">0</div>
<div style="position:absolute;left:761px;top:599.40px;width:1631px;height:32.25px;background:#ffffff"></div>
<div class="t" style="left:774px;top:607.48px;font-size:15.5px;color:#363636;font-weight:normal;font-style:normal;letter-spacing:-0.072px;">Exchanges total</div>
<div class="t" style="left:1427px;top:607.48px;font-size:15.5px;color:#363636;font-weight:normal;font-style:normal;letter-spacing:0px;">0</div>
<div style="position:absolute;left:761px;top:631.65px;width:1631px;height:32.25px;background:#f5f5f5"></div>
<div class="t" style="left:774px;top:639.73px;font-size:15.5px;color:#363636;font-weight:normal;font-style:normal;letter-spacing:0.075px;">External redeliveries</div>
<div class="t" style="left:1427px;top:639.73px;font-size:15.5px;color:#363636;font-weight:normal;font-style:normal;letter-spacing:0px;">0</div>
<div style="position:absolute;left:761px;top:663.90px;width:1631px;height:32.25px;background:#ffffff"></div>
<div class="t" style="left:774px;top:671.98px;font-size:15.5px;color:#363636;font-weight:normal;font-style:normal;letter-spacing:0.066px;">Failures handled</div>
<div class="t" style="left:1427px;top:671.98px;font-size:15.5px;color:#363636;font-weight:normal;font-style:normal;letter-spacing:0px;">0</div>
<div style="position:absolute;left:761px;top:696.15px;width:1631px;height:32.25px;background:#f5f5f5"></div>
<div class="t" style="left:774px;top:704.23px;font-size:15.5px;color:#363636;font-weight:normal;font-style:normal;letter-spacing:0.044px;">First exchange completed exchange id</div>
<div style="position:absolute;left:761px;top:728.40px;width:1631px;height:32.25px;background:#ffffff"></div>
<div class="t" style="left:774px;top:736.48px;font-size:15.5px;color:#363636;font-weight:normal;font-style:normal;letter-spacing:0.152px;">First exchange completed timestamp</div>
<div style="position:absolute;left:761px;top:760.65px;width:1631px;height:32.25px;background:#f5f5f5"></div>
<div class="t" style="left:774px;top:768.73px;font-size:15.5px;color:#363636;font-weight:normal;font-style:normal;letter-spacing:0.045px;">First exchange failure exchange id</div>
<div style="position:absolute;left:761px;top:792.90px;width:1631px;height:32.25px;background:#ffffff"></div>
<div class="t" style="left:774px;top:800.98px;font-size:15.5px;color:#363636;font-weight:normal;font-style:normal;letter-spacing:0px;">First exchange failure timestamp</div>
<div style="position:absolute;left:761px;top:309px;width:1631px;height:1px;background:#d1d1d1"></div>
<div style="position:absolute;left:761px;top:341.40px;width:1631px;height:1px;background:#d1d1d1"></div>
<div style="position:absolute;left:761px;top:373.65px;width:1631px;height:1px;background:#d1d1d1"></div>
<div style="position:absolute;left:761px;top:405.90px;width:1631px;height:1px;background:#d1d1d1"></div>
<div style="position:absolute;left:761px;top:438.15px;width:1631px;height:1px;background:#d1d1d1"></div>
<div style="position:absolute;left:761px;top:470.40px;width:1631px;height:1px;background:#d1d1d1"></div>
<div style="position:absolute;left:761px;top:502.65px;width:1631px;height:1px;background:#d1d1d1"></div>
<div style="position:absolute;left:761px;top:534.90px;width:1631px;height:1px;background:#d1d1d1"></div>
<div style="position:absolute;left:761px;top:567.15px;width:1631px;height:1px;background:#d1d1d1"></div>
<div style="position:absolute;left:761px;top:599.40px;width:1631px;height:1px;background:#d1d1d1"></div>
<div style="position:absolute;left:761px;top:631.65px;width:1631px;height:1px;background:#d1d1d1"></div>
<div style="position:absolute;left:761px;top:663.90px;width:1631px;height:1px;background:#d1d1d1"></div>
<div style="position:absolute;left:761px;top:696.15px;width:1631px;height:1px;background:#d1d1d1"></div>
<div style="position:absolute;left:761px;top:728.40px;width:1631px;height:1px;background:#d1d1d1"></div>
<div style="position:absolute;left:761px;top:760.65px;width:1631px;height:1px;background:#d1d1d1"></div>
<div style="position:absolute;left:761px;top:792.90px;width:1631px;height:1px;background:#d1d1d1"></div>
<div style="position:absolute;left:761px;top:309px;width:1px;height:497px;background:#d1d1d1"></div>
<div style="position:absolute;left:2391px;top:309px;width:1px;height:497px;background:#d1d1d1"></div>
<div style="position:absolute;left:1413px;top:309px;width:1px;height:497px;background:#d1d1d1"></div>
<div class="t" style="left:774px;top:317.58px;font-size:15.5px;color:#363636;font-weight:bold;font-style:normal;letter-spacing:0.06px;-webkit-text-stroke:0.4px #f1f1f1;">Attribute</div>
<div class="t" style="left:1427px;top:317.58px;font-size:15.5px;color:#363636;font-weight:bold;font-style:normal;letter-spacing:-0.25px;-webkit-text-stroke:0.4px #f1f1f1;">Value</div>
<div style="position:absolute;left:2417px;top:241px;width:19px;height:565px;background:#f1f1f1"></div>
<div style="position:absolute;left:2419px;top:262px;width:17px;height:544px;background:#c1c1c1"></div>
<svg style="position:absolute;left:2417px;top:241px" width="19" height="20"><path d="M4.5 14 L9.5 9 L14.5 14 Z" fill="#a3a3a3"/></svg>
<div style="position:absolute;left:2293px;top:115px;width:118px;height:132px;background:#fff;border:1px solid #bbbbbb;box-shadow:0 6px 14px rgba(0,0,0,0.18)"></div>
<div style="position:absolute;left:2294px;top:116px;width:118px;height:30px;background:#e6e6e6;border-bottom:1px solid #bbbbbb"></div>
<div style="position:absolute;left:2295px;top:117px;width:112px;height:24px;border:2px solid #000;border-radius:5px;background:#e6e6e6"></div>
<svg style="position:absolute;left:2300px;top:124px" width="15" height="15"><path d="M1 1 L13 7.3 L1 13.6 Z" fill="#4a4f55"/></svg>
<div class="t" style="left:2324.4px;top:124.16px;font-size:15.4px;color:#363636;font-weight:bold;font-style:normal;letter-spacing:0.072px;-webkit-text-stroke:0.4px #e6e6e6;">Started</div>
<svg style="position:absolute;left:2391px;top:128px" width="12" height="10"><path d="M2.2 3.2 L6 7 L9.8 3.2" fill="none" stroke="#363636" stroke-width="1.15"/></svg>
<div class="t" style="left:2307px;top:159.96px;font-size:15.4px;color:#9c9c9c;font-weight:normal;font-style:normal;letter-spacing:-0.125px;">Start</div>
<div class="t" style="left:2307px;top:189.96px;font-size:15.4px;color:#363636;font-weight:normal;font-style:normal;letter-spacing:-0.499px;">Stop</div>
<div class="t" style="left:2307px;top:218.96px;font-size:15.4px;color:#9c9c9c;font-weight:normal;font-style:normal;letter-spacing:0.0px;">Delete</div>
<div style="position:absolute;left:730px;top:665px;width:7px;height:36px;background:#fff;border:1px solid #c8c8c8"></div>
<div style="position:absolute;left:2253px;top:97px;width:166px;height:180px;border:8px solid #ec1c24"></div>
</body></html>
